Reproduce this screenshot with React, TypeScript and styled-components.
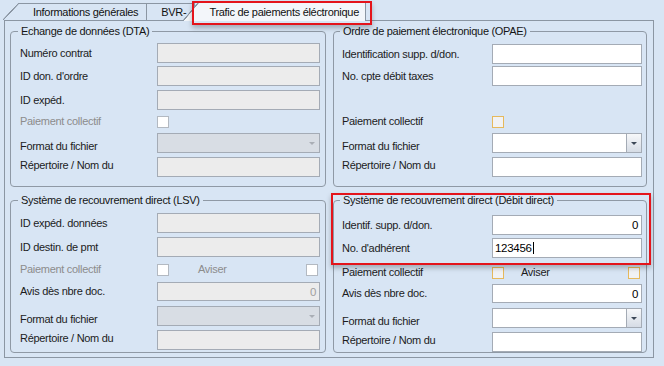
import React from "react";
import styled, { createGlobalStyle } from "styled-components";

const BG = "#d8e5f4";
const LINE = "#8b96a3";
const FIELD_LINE = "#a4abb5";

type Field =
  | { kind: "text"; value?: string; align?: "left" | "right"; caret?: boolean }
  | { kind: "combo" }
  | { kind: "check"; aviser?: number }
  | { kind: "empty" };

interface iRow {
  label?: string;
  field: Field;
  mt: number;
  h?: number;
  shift?: number;
}

interface iGroup {
  title: string;
  disabled?: boolean;
  labelW: number;
  pl: number;
  pr: number;
  pt: number;
  rows: iRow[];
}

const groups: iGroup[] = [
  {
    title: "Echange de données (DTA)",
    disabled: true,
    labelW: 137,
    pl: 9,
    pr: 5,
    pt: 5,
    rows: [
      { label: "Numéro contrat", field: { kind: "text" }, mt: 0 },
      { label: "ID don. d'ordre", field: { kind: "text" }, mt: 3 },
      { label: "ID expéd.", field: { kind: "text" }, mt: 4 },
      { label: "Paiement collectif", field: { kind: "check" }, mt: 4, h: 15 },
      { label: "Format du fichier", field: { kind: "combo" }, mt: 4, shift: 3 },
      { label: "Répertoire / Nom du", field: { kind: "text" }, mt: 4, shift: -2 },
    ],
  },
  {
    title: "Ordre de paiement électronique (OPAE)",
    labelW: 150,
    pl: 8,
    pr: 4,
    pt: 6,
    rows: [
      { label: "Identification supp. d/don.", field: { kind: "text" }, mt: 0 },
      { label: "No. cpte débit taxes", field: { kind: "text" }, mt: 2 },
      { label: "Paiement collectif", field: { kind: "check" }, mt: 28, h: 15 },
      { label: "Format du fichier", field: { kind: "combo" }, mt: 4, shift: 3 },
      { label: "Répertoire / Nom du", field: { kind: "text" }, mt: 4, shift: -2 },
    ],
  },
  {
    title: "Système de recouvrement direct (LSV)",
    disabled: true,
    labelW: 137,
    pl: 9,
    pr: 5,
    pt: 6,
    rows: [
      { label: "ID expéd. données", field: { kind: "text" }, mt: 0 },
      { label: "ID destin. de pmt", field: { kind: "text" }, mt: 4 },
      { label: "Paiement collectif", field: { kind: "check", aviser: 29 }, mt: 5, h: 15 },
      { label: "Avis dès nbre doc.", field: { kind: "text", value: "0", align: "right" }, mt: 5, h: 19 },
      { label: "Format du fichier", field: { kind: "combo" }, mt: 5, shift: 3 },
      { label: "Répertoire / Nom du", field: { kind: "text" }, mt: 4, shift: -2 },
    ],
  },
  {
    title: "Système de recouvrement direct (Débit direct)",
    labelW: 150,
    pl: 8,
    pr: 4,
    pt: 8,
    rows: [
      { label: "Identif. supp. d/don.", field: { kind: "text", value: "0", align: "right" }, mt: 0 },
      { label: "No. d'adhérent", field: { kind: "text", value: "123456", caret: true }, mt: 3 },
      { label: "Paiement collectif", field: { kind: "check", aviser: 17 }, mt: 7, h: 15 },
      { label: "Avis dès nbre doc.", field: { kind: "text", value: "0", align: "right" }, mt: 4, h: 19 },
      { label: "Format du fichier", field: { kind: "combo" }, mt: 5, shift: 3 },
      { label: "Répertoire / Nom du", field: { kind: "text" }, mt: 4, shift: -2 },
    ],
  },
];

const tabs = [
  { name: "Informations générales", gap: 0, z: 2 },
  { name: "BVR-", gap: 0, z: 1 },
  { name: "Trafic de paiements éléctronique", gap: 4, z: 3, active: true },
];

function FieldView({ field, disabled }: { field: Field; disabled?: boolean }) {
  if (field.kind === "text") {
    return (
      <TextBox $disabled={disabled} $align={field.align}>
        {field.value}
        {field.caret && <Caret />}
      </TextBox>
    );
  }
  if (field.kind === "combo") {
    return (
      <Combo $disabled={disabled}>
        <ComboButton $disabled={disabled}>
          <Arrow $disabled={disabled} />
        </ComboButton>
      </Combo>
    );
  }
  if (field.kind === "check") {
    return (
      <CheckLine>
        <CheckBox $disabled={disabled} />
        {field.aviser !== undefined && (
          <>
            <Label $disabled={disabled} style={{ marginLeft: field.aviser }}>
              Aviser
            </Label>
            <Spacer />
            <CheckBox $disabled={disabled} />
          </>
        )}
      </CheckLine>
    );
  }
  return null;
}

export default function App() {
  return (
    <Window>
      <GlobalStyle />
      <TabStrip>
        {tabs.map((tab) => (
          <Tab key={tab.name} $active={tab.active} $z={tab.z} $gap={tab.gap}>
            {tab.name}
          </Tab>
        ))}
      </TabStrip>
      <Panel>
        {groups.map((group) => (
          <Group key={group.title} $pl={group.pl} $pr={group.pr} $pt={group.pt}>
            <Legend>{group.title}</Legend>
            {group.rows.map((row, i) => {
              const checkDisabled = group.disabled && row.field.kind === "check";
              return (
                <Row key={i} $labelW={group.labelW} $mt={row.mt} $h={row.h ?? 20}>
                  <Label $disabled={checkDisabled} $shift={row.shift}>
                    {row.label}
                  </Label>
                  <FieldView field={row.field} disabled={group.disabled} />
                </Row>
              );
            })}
          </Group>
        ))}
      </Panel>
      <Highlight $x={192} $y={1} $w={180} $h={24} />
      <Highlight $x={331} $y={193} $w={320} $h={72} />
    </Window>
  );
}

const GlobalStyle = createGlobalStyle`
  html, body {
    margin: 0;
    padding: 0;
    background: ${BG};
  }
  body {
    font-family: "Liberation Sans", Arial, sans-serif;
    font-size: 11px;
    letter-spacing: -0.3px;
    color: #1c1c1c;
  }
`;

const Window = styled.div`
  position: relative;
  width: 664px;
  height: 366px;
  overflow: hidden;
  background: ${BG};
`;

const TabStrip = styled.div`
  position: relative;
  z-index: 2;
  display: flex;
  align-items: flex-end;
  height: 20px;
  padding-left: 19px;
`;

const Tab = styled.div<{ $active?: boolean; $z: number; $gap: number }>`
  position: relative;
  z-index: ${(p) => p.$z};
  display: flex;
  align-items: center;
  margin-left: ${(p) => p.$gap}px;
  margin-bottom: ${(p) => (p.$active ? -1 : 0)}px;
  height: ${(p) => (p.$active ? 18 : 16)}px;
  padding: 0 ${(p) => (p.$active ? 6 : 8)}px 0 ${(p) => (p.$active ? 10 : 14)}px;
  border-top: 1px solid ${LINE};
  border-right: 1px solid ${LINE};
  background: ${(p) => (p.$active ? "#f3f6fa" : BG)};
  color: #111;
  white-space: nowrap;

  &::before {
    content: "";
    position: absolute;
    top: -1px;
    bottom: 0;
    left: -16px;
    width: 16px;
    background: linear-gradient(
      to top left,
      ${(p) => (p.$active ? "#f3f6fa" : BG)} calc(50% - 0.8px),
      ${LINE} calc(50% - 0.4px),
      ${LINE} calc(50% + 0.4px),
      transparent calc(50% + 0.8px)
    );
  }
`;

const Panel = styled.div`
  box-sizing: border-box;
  width: 650px;
  height: 338px;
  margin-left: 4px;
  border: 1px solid ${LINE};
  padding: 4px 6px 0 5px;
  display: grid;
  grid-template-columns: 316px 314px;
  grid-template-rows: 162px 159px;
  column-gap: 7px;
  row-gap: 7px;
`;

const Group = styled.fieldset<{ $pl: number; $pr: number; $pt: number }>`
  margin: 0;
  min-width: 0;
  border: 1px solid #8f99a5;
  border-radius: 4px;
  padding: ${(p) => p.$pt}px ${(p) => p.$pr}px 0 ${(p) => p.$pl}px;
  display: flex;
  flex-direction: column;
`;

const Legend = styled.legend`
  margin-left: -2px;
  padding: 0 3px;
  line-height: 13px;
  font-size: 11px;
  color: #151515;
`;

const Row = styled.div<{ $labelW: number; $mt: number; $h: number }>`
  display: grid;
  grid-template-columns: ${(p) => p.$labelW}px 1fr;
  align-items: center;
  height: ${(p) => p.$h}px;
  margin-top: ${(p) => p.$mt}px;
`;

const Label = styled.span<{ $disabled?: boolean; $shift?: number }>`
  line-height: 13px;
  white-space: nowrap;
  color: ${(p) => (p.$disabled ? "#8c8c8c" : "#1c1c1c")};
  transform: translateY(${(p) => p.$shift ?? 0}px);
`;

const TextBox = styled.div<{ $disabled?: boolean; $align?: "left" | "right" }>`
  box-sizing: border-box;
  height: 100%;
  display: flex;
  align-items: center;
  justify-content: ${(p) => (p.$align === "right" ? "flex-end" : "flex-start")};
  padding: 0 ${(p) => (p.$align === "right" ? 3 : 2)}px;
  border: 1px solid ${FIELD_LINE};
  background: ${(p) => (p.$disabled ? "#ececec" : "#ffffff")};
  color: ${(p) => (p.$disabled ? "#a0a0a0" : "#000")};
  font-size: 11.5px;
`;

const Caret = styled.span`
  display: inline-block;
  width: 1px;
  height: 12px;
  margin-left: 1px;
  background: #000;
`;

const Combo = styled.div<{ $disabled?: boolean }>`
  box-sizing: border-box;
  height: 100%;
  display: flex;
  justify-content: flex-end;
  border: 1px solid ${FIELD_LINE};
  background: ${(p) => (p.$disabled ? "#d8dde4" : "#ffffff")};
`;

const ComboButton = styled.div<{ $disabled?: boolean }>`
  width: 14px;
  display: flex;
  align-items: center;
  justify-content: center;
  border-left: ${(p) => (p.$disabled ? "none" : `1px solid ${FIELD_LINE}`)};
  background: ${(p) =>
    p.$disabled ? "transparent" : "linear-gradient(#f7f8fa, #d6dce5)"};
`;

const Arrow = styled.div<{ $disabled?: boolean }>`
  width: 0;
  height: 0;
  border-left: 3px solid transparent;
  border-right: 3px solid transparent;
  border-top: 3px solid ${(p) => (p.$disabled ? "#a9aeb5" : "#3c4756")};
`;

const CheckLine = styled.div`
  display: flex;
  align-items: center;
  padding-right: 2px;
`;

const CheckBox = styled.div<{ $disabled?: boolean }>`
  box-sizing: border-box;
  width: 12px;
  height: 12px;
  border: 1px solid ${(p) => (p.$disabled ? "#b3b9c1" : "#e6b95c")};
  background: ${(p) => (p.$disabled ? "#ffffff" : "#f1f2f4")};
`;

const Spacer = styled.div`
  flex: 1;
`;

const Highlight = styled.div<{ $x: number; $y: number; $w: number; $h: number }>`
  position: absolute;
  left: ${(p) => p.$x}px;
  top: ${(p) => p.$y}px;
  width: ${(p) => p.$w}px;
  height: ${(p) => p.$h}px;
  box-sizing: border-box;
  border: 2px solid #e4141b;
  box-shadow: 0 3px 5px rgba(0, 0, 0, 0.25);
  z-index: 5;
  pointer-events: none;
`;
